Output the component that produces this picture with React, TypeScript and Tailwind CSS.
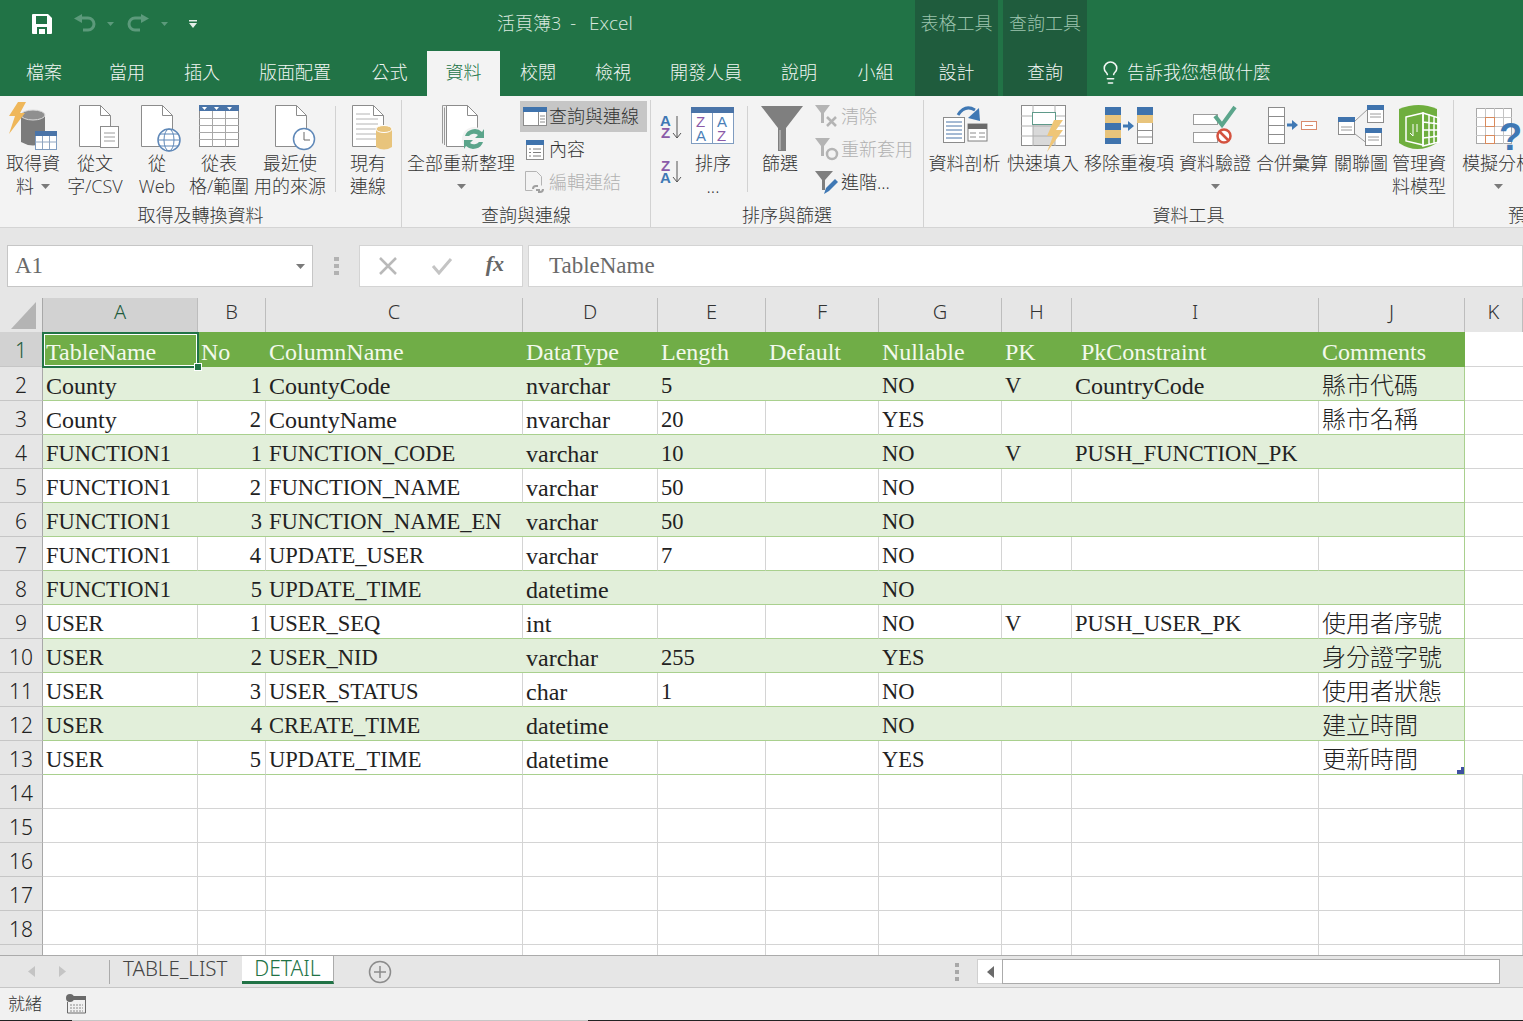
import React from "react";
import { Lightbulb } from "lucide-react";

const GRID_COLS =
  "grid grid-cols-[43px_155px_68px_257px_135px_108px_113px_123px_70px_247px_146px_58px]";

const HEAD = ["TableName", "No", "ColumnName", "DataType", "Length", "Default", "Nullable", "PK", "\u00a0PkConstraint", "Comments"];

const ROWS: string[][] = [
  ["County", "1", "CountyCode", "nvarchar", "5", "", "NO", "V", "CountryCode", "縣市代碼"],
  ["County", "2", "CountyName", "nvarchar", "20", "", "YES", "", "", "縣市名稱"],
  ["FUNCTION1", "1", "FUNCTION_CODE", "varchar", "10", "", "NO", "V", "PUSH_FUNCTION_PK", ""],
  ["FUNCTION1", "2", "FUNCTION_NAME", "varchar", "50", "", "NO", "", "", ""],
  ["FUNCTION1", "3", "FUNCTION_NAME_EN", "varchar", "50", "", "NO", "", "", ""],
  ["FUNCTION1", "4", "UPDATE_USER", "varchar", "7", "", "NO", "", "", ""],
  ["FUNCTION1", "5", "UPDATE_TIME", "datetime", "", "", "NO", "", "", ""],
  ["USER", "1", "USER_SEQ", "int", "", "", "NO", "V", "PUSH_USER_PK", "使用者序號"],
  ["USER", "2", "USER_NID", "varchar", "255", "", "YES", "", "", "身分證字號"],
  ["USER", "3", "USER_STATUS", "char", "1", "", "NO", "", "", "使用者狀態"],
  ["USER", "4", "CREATE_TIME", "datetime", "", "", "NO", "", "", "建立時間"],
  ["USER", "5", "UPDATE_TIME", "datetime", "", "", "YES", "", "", "更新時間"],
];

const CELL_FONT = "font-['Liberation_Serif','Noto_Sans_CJK_TC',serif] font-light leading-[38px] whitespace-nowrap";

// the reference's latin capitals run narrower than its lowercase
function cellSize(v: string) {
  return v === v.toUpperCase() && /[A-Z0-9]/.test(v) ? "text-[22.5px]" : "text-[24px]";
}

function Caret({ dim }: { dim?: boolean }) {
  return (
    <svg width="9" height="5" viewBox="0 0 9 5">
      <path d="M0 0h9L4.5 5z" fill={dim ? "#b5b5b5" : "#7a7a7a"} />
    </svg>
  );
}

function Page({ x = 9, lines = false }: { x?: number; lines?: boolean }) {
  return (
    <g>
      <path d={`M${x + 0.5} 1.5h21l10 10v31h-31z`} fill="#fff" stroke="#8c8c8c" />
      <path d={`M${x + 21.5} 1.5v10h10`} fill="none" stroke="#8c8c8c" />
      {lines && (
        <path
          d={`M${x + 4} 10h14M${x + 4} 15h22M${x + 4} 20h22M${x + 4} 25h22M${x + 4} 30h22M${x + 4} 35h22`}
          stroke="#b4b4b4"
        />
      )}
    </g>
  );
}

function Ico({ children }: { children: React.ReactNode }) {
  return (
    <svg width="50" height="48" viewBox="0 0 50 48" className="overflow-visible shrink-0">
      {children}
    </svg>
  );
}

const IconGetData = () => (
  <Ico>
    <path d="M13 11v27q12 7 24 0V11z" fill="#7b7b7b" />
    <ellipse cx="25" cy="11" rx="12" ry="5" fill="#8f8f8f" stroke="#dcdcdc" />
    <path d="M10-2h8l-6 11h5L1 30l6-18H1z" fill="#efb75a" />
    <rect x="27.500" y="27.500" width="21" height="18" fill="#fff" stroke="#7f9cc0" />
    <rect x="27" y="27" width="22" height="5" fill="#4a74a8" />
    <path d="M27 38h22M34.500 32v13M41.500 32v13" stroke="#8fa5c0" />
  </Ico>
);

const IconText = () => (
  <Ico>
    <Page />
    <rect x="30.500" y="22.500" width="18" height="21" fill="#fff" stroke="#8c8c8c" />
    <path d="M34 29h11M34 33h11M34 37h11" stroke="#9c9c9c" />
  </Ico>
);

const IconWeb = () => (
  <Ico>
    <Page />
    <circle cx="37" cy="36" r="11" fill="#fff" stroke="#5f88b8" strokeWidth="1.5" />
    <ellipse cx="37" cy="36" rx="5" ry="11" fill="none" stroke="#5f88b8" />
    <path d="M26 36h22M28 30h18M28 42h18" stroke="#5f88b8" />
  </Ico>
);

const IconTable = () => (
  <Ico>
    <rect x="5.500" y="1.500" width="39" height="41" fill="#fff" stroke="#8c8c8c" />
    <rect x="5" y="1" width="40" height="6" fill="#4a74a8" />
    <path d="M8 3h5l-2.500 3zM20 3h5l-2.500 3zM33 3h5l-2.500 3z" fill="#fff" />
    <path d="M5 14.500h40M5 21.500h40M5 28.500h40M5 35.500h40M18.500 7v36M31.500 7v36" stroke="#a8a8a8" />
  </Ico>
);

const IconRecent = () => (
  <Ico>
    <Page x={10} />
    <circle cx="39" cy="35" r="10.500" fill="#fff" stroke="#5f88b8" strokeWidth="1.500" />
    <path d="M39 28v8h6" fill="none" stroke="#6a6a6a" />
  </Ico>
);

const IconExisting = () => (
  <Ico>
    <Page lines />
    <path d="M33 25v18q8 5 16 0V25z" fill="#e8c47c" />
    <ellipse cx="41" cy="25" rx="8" ry="3.500" fill="#e8c47c" stroke="#fff" />
  </Ico>
);

const IconRefresh = () => (
  <Ico>
    <path d="M6.500 1.500h22M6.500 1.500v38" fill="none" stroke="#9a9a9a" />
    <path d="M8.500 3.500V41" fill="none" stroke="#9a9a9a" />
    <Page x={10} />
    <circle cx="38" cy="35" r="12" fill="#f3f3f3" />
    <path d="M29 32a10 9 0 0 1 17-4l2-3v9h-9l3-3a6 5 0 0 0-9 1zM47 38a10 9 0 0 1-17 4l-2 3v-9h9l-3 3a6 5 0 0 0 9-1z" fill="#5ba58b" />
  </Ico>
);

const IconSortBig = () => (
  <Ico>
    <rect x="3.500" y="3.500" width="42" height="36" fill="#fff" stroke="#7f9cc0" />
    <rect x="3" y="3" width="43" height="6" fill="#4a74a8" />
    <path d="M24.500 9v30" stroke="#7f9cc0" />
    <text fontSize="15" fontFamily="'Liberation Sans',sans-serif">
      <tspan x="8" y="23" fill="#8a5aa8">Z</tspan>
      <tspan x="8" y="37" fill="#4a7fb8">A</tspan>
      <tspan x="29" y="23" fill="#4a7fb8">A</tspan>
      <tspan x="29" y="37" fill="#8a5aa8">Z</tspan>
    </text>
  </Ico>
);

const IconFunnel = () => (
  <Ico>
    <path d="M6 2h42L31 24v23h-8V24z" fill="#7f7f7f" />
    <path d="M25 26v20" stroke="#a8a8a8" strokeWidth="2" />
  </Ico>
);

const IconColumns = () => (
  <Ico>
    <rect x="3.500" y="13.500" width="21" height="25" fill="#fff" stroke="#8c8c8c" />
    <path d="M6 18h16M6 22h16M6 26h16M6 30h16M6 34h16" stroke="#4a74a8" />
    <rect x="28" y="20" width="19" height="17" fill="#fff" stroke="#7f7f7f" />
    <rect x="28" y="20" width="19" height="5" fill="#6a6a6a" />
    <path d="M30 29h6M39 29h6M30 33h6M39 33h6" stroke="#8c8c8c" />
    <path d="M18 11q7-11 17-5" fill="none" stroke="#3f78b4" strokeWidth="3" />
    <path d="M28 14l12 3-1-13z" fill="#3f78b4" />
  </Ico>
);

const IconFlash = () => (
  <Ico>
    <rect x="3.500" y="1.500" width="44" height="40" fill="#fff" stroke="#8c8c8c" />
    <rect x="15" y="19" width="22" height="22" fill="#d9d9d9" />
    <path d="M3 12h44M3 22h44M3 32h44M15 1v41M37 1v41" stroke="#b0b0b0" />
    <rect x="14.500" y="8.500" width="23" height="12" fill="#fff" stroke="#5f9a8a" />
    <path d="M45 16h-9l-7 16h6l-6 16 16-22h-7z" fill="#efc678" />
  </Ico>
);

const IconDup = () => (
  <Ico>
    <rect x="1" y="3" width="16" height="37" fill="#fff" />
    <path d="M1 3h16v8H1zM1 19h16v8H1zM1 33h16v7H1z" fill="#3f73ad" />
    <path d="M1 11h16v8H1zM1 26h16v8H1z" fill="#e8c47c" />
    <rect x="33.500" y="3.500" width="15" height="36" fill="#fff" stroke="#8c8c8c" />
    <path d="M33 3h16v8H33z" fill="#3f73ad" />
    <path d="M33 11h16v8H33z" fill="#e8c47c" />
    <path d="M33 26.500h16M33 33h16" stroke="#8c8c8c" />
    <path d="M19 22h6" stroke="#3f78b4" strokeWidth="3" />
    <path d="M24 17l6 5-6 5z" fill="#3f78b4" />
  </Ico>
);

const IconValidate = () => (
  <Ico>
    <rect x="3.500" y="10.500" width="24" height="10" fill="#fff" stroke="#9c9c9c" />
    <rect x="3.500" y="28.500" width="24" height="10" fill="#fff" stroke="#9c9c9c" />
    <path d="M25 12l7 9L45 3" fill="none" stroke="#5ba58b" strokeWidth="4" />
    <circle cx="34" cy="32" r="6.500" fill="#fff" stroke="#d4523f" strokeWidth="2.500" />
    <path d="M30 28l8 8" stroke="#d4523f" strokeWidth="2.500" />
  </Ico>
);

const IconConsolidate = () => (
  <Ico>
    <rect x="1.500" y="3.500" width="16" height="36" fill="#fff" stroke="#8c8c8c" />
    <path d="M1 12.500h17M1 21.500h17M1 30.500h17" stroke="#8c8c8c" />
    <path d="M20 21h6" stroke="#3f78b4" strokeWidth="3" />
    <path d="M25 16l6 5-6 5z" fill="#3f78b4" />
    <rect x="34.500" y="17.500" width="15" height="8" fill="#fff" stroke="#d98a6c" />
    <path d="M38 21.500h8" stroke="#d98a6c" />
  </Ico>
);

const IconRelation = () => (
  <Ico>
    <path d="M19 17L32 5M19 30l13 10" fill="none" stroke="#9c9c9c" />
    <rect x="2.500" y="13.500" width="16" height="17" fill="#fff" stroke="#8c8c8c" />
    <rect x="2" y="13" width="17" height="5" fill="#3f73ad" />
    <rect x="31.500" y="1.500" width="16" height="17" fill="#fff" stroke="#8c8c8c" />
    <rect x="31" y="1" width="17" height="5" fill="#3f73ad" />
    <rect x="29.500" y="24.500" width="16" height="17" fill="#fff" stroke="#8c8c8c" />
    <rect x="29" y="24" width="17" height="5" fill="#3f73ad" />
    <path d="M5 23h11M5 26h11M34 10h11M34 13h11M32 33h11M32 36h11" stroke="#9c9c9c" />
  </Ico>
);

const IconModel = () => (
  <Ico>
    <path d="M5 5q20-8 38 0v34q-20 12-38 0z" fill="#6fae3e" />
    <path d="M12 13l17-4v32l-17-4z" fill="none" stroke="#fff" strokeWidth="1.500" />
    <path d="M29 9l16 5v24l-16 4zM29 18l16 2M29 26l16 0M29 34l16-2M35 10v31M40 12v28" fill="none" stroke="#fff" strokeWidth="1.500" />
    <path d="M19 20v12M19 32l-3-3M23 20v8" fill="none" stroke="#fff" />
  </Ico>
);

const IconWhatIf = () => (
  <Ico>
    <rect x="3.500" y="4.500" width="35" height="35" fill="#fff" stroke="#a8a8a8" />
    <path d="M3 13.500h36M3 22.500h36M3 31.500h36M12.500 4v36M21.500 4v36M30.500 4v36" stroke="#c4c4c4" />
    <rect x="12.500" y="13.500" width="9" height="9" fill="none" stroke="#d98a5c" />
    <rect x="12.500" y="31.500" width="9" height="8" fill="none" stroke="#d98a5c" />
    <text x="26" y="46" fill="#3f78b4" fontSize="38" fontWeight="700" fontFamily="'Liberation Sans',sans-serif">?</text>
  </Ico>
);

function Big({
  w,
  lines,
  icon,
  caret,
}: {
  w: string;
  lines: string[];
  icon: React.ReactNode;
  caret?: boolean;
}) {
  return (
    <div className={`flex flex-col items-center shrink-0 ${w}`}>
      {icon}
      {lines.map((l, i) => (
        <div key={i} className="whitespace-nowrap h-[23px] flex items-center gap-[7px]">
          {l}
          {caret && lines.length === 2 && i === 1 && <Caret />}
        </div>
      ))}
      {caret && lines.length === 1 && (
        <div className="h-[23px] flex items-center">
          <Caret />
        </div>
      )}
    </div>
  );
}

function Small({
  label,
  icon,
  dim,
  active,
}: {
  label: string;
  icon: React.ReactNode;
  dim?: boolean;
  active?: boolean;
}) {
  return (
    <div
      className={`h-[31px] flex items-center whitespace-nowrap mb-[2px] ${dim ? "text-[#b1b1b1]" : ""} ${
        active ? "bg-[#c6c6c6]" : ""
      }`}
    >
      <div className="w-[29px] h-[26px] flex items-center justify-center shrink-0">{icon}</div>
      {label}
    </div>
  );
}

function Group({ w, label, children, last }: { w: string; label: string; children: React.ReactNode; last?: boolean }) {
  return (
    <div className={`shrink-0 flex flex-col h-[128px] mt-[4px] ${w} ${last ? "" : "border-r border-[#d2d2d2]"}`}>
      <div className="flex flex-1 pt-[4px]">{children}</div>
      <div className="h-[28px] text-center leading-[30px] whitespace-nowrap">{label}</div>
    </div>
  );
}

function TitleBar() {
  return (
    <div className="h-[48px] flex text-[#d9e8df]">
      <div className="w-[497px] flex items-center pl-[32px] shrink-0">
        <svg width="20" height="20" viewBox="0 0 20 20">
          <path d="M1 0h15l4 4v15a1 1 0 0 1-1 1H1a1 1 0 0 1-1-1V1a1 1 0 0 1 1-1z" fill="#fff" />
          <rect x="4" y="2" width="11" height="8" fill="#217346" />
          <rect x="5" y="13" width="10" height="7" fill="#217346" />
          <rect x="7" y="15" width="6" height="5" fill="#fff" />
        </svg>
        <svg width="24" height="20" viewBox="0 0 24 20" className="ml-[20px]">
          <path d="M9 4h7a6 6 0 0 1 0 12h-5" fill="none" stroke="#5c9a7b" strokeWidth="3" />
          <path d="M10 0v9L2 4.500z" fill="#5c9a7b" />
        </svg>
        <div className="ml-[11px]">
          <svg width="7" height="4" viewBox="0 0 7 4" className="block"><path d="M0 0h7L3.500 4z" fill="#5c9a7b" /></svg>
        </div>
        <svg width="24" height="20" viewBox="0 0 24 20" className="ml-[13px]">
          <path d="M15 4H8a6 6 0 0 0 0 12h5" fill="none" stroke="#5c9a7b" strokeWidth="3" />
          <path d="M14 0v9l8-4.500z" fill="#5c9a7b" />
        </svg>
        <div className="ml-[10px]">
          <svg width="7" height="4" viewBox="0 0 7 4" className="block"><path d="M0 0h7L3.500 4z" fill="#5c9a7b" /></svg>
        </div>
        <svg width="8" height="8" viewBox="0 0 8 8" className="ml-[21px]">
          <path d="M0 0h8v1.500H0zM0 3h8L4 8z" fill="#e4efe9" />
        </svg>
      </div>
      <div className="w-[418px] shrink-0 text-[18px] leading-[46px] flex">
        <span>活頁簿3</span>
        <span className="ml-[9px]">-</span>
        <span className="ml-[13px] text-[19px]">Excel</span>
      </div>
      <div className="w-[83px] shrink-0 bg-[#1f5c3d] text-[#9cc4ae] text-[18px] leading-[46px] text-center">表格工具</div>
      <div className="w-[5px] shrink-0" />
      <div className="w-[84px] shrink-0 bg-[#1f5c3d] text-[#9cc4ae] text-[18px] leading-[46px] text-center">查詢工具</div>
    </div>
  );
}

const TABS = [
  { t: "檔案", w: "w-[88px]" },
  { t: "當用", w: "w-[78px]" },
  { t: "插入", w: "w-[72px]" },
  { t: "版面配置", w: "w-[114px]" },
  { t: "公式", w: "w-[75px]" },
  { t: "資料", w: "w-[73px]", active: true },
  { t: "校閱", w: "w-[76px]" },
  { t: "檢視", w: "w-[74px]" },
  { t: "開發人員", w: "w-[112px]" },
  { t: "說明", w: "w-[74px]" },
  { t: "小組", w: "w-[79px]" },
];

function TabBar() {
  return (
    <div className="h-[48px] flex text-[18px] text-[#f1f6f3] items-end">
      {TABS.map((tab) =>
        tab.active ? (
          <div key={tab.t} className={`${tab.w} h-[45px] shrink-0 bg-[#f3f3f3] text-[#217346] text-center leading-[42px]`}>
            {tab.t}
          </div>
        ) : (
          <div key={tab.t} className={`${tab.w} h-[48px] shrink-0 text-center leading-[48px]`}>
            {tab.t}
          </div>
        ),
      )}
      <div className="w-[83px] h-[48px] shrink-0 bg-[#1f5c3d] text-center leading-[48px]">設計</div>
      <div className="w-[5px] shrink-0" />
      <div className="w-[84px] h-[48px] shrink-0 bg-[#1f5c3d] text-center leading-[48px]">查詢</div>
      <div className="h-[48px] flex items-center pl-[11px] gap-[4px]">
        <Lightbulb size={25} strokeWidth={1.5} />
        <span>告訴我您想做什麼</span>
      </div>
    </div>
  );
}

function Ribbon() {
  return (
    <div className="h-[132px] bg-[#f3f3f3] border-b border-[#d4d4d4] flex overflow-hidden text-[18px] leading-[23px] text-[#333]">
      <Group w="w-[402px]" label="取得及轉換資料">
        <Big w="w-[66px]" lines={["取得資", "料"]} caret icon={<IconGetData />} />
        <Big w="w-[58px]" lines={["從文", "字/CSV"]} icon={<IconText />} />
        <Big w="w-[66px]" lines={["從", "Web"]} icon={<IconWeb />} />
        <Big w="w-[58px]" lines={["從表", "格/範圍"]} icon={<IconTable />} />
        <Big w="w-[84px]" lines={["最近使", "用的來源"]} icon={<IconRecent />} />
        <div className="w-[4px] h-[86px] border-r border-[#d2d2d2] shrink-0 mt-[2px]" />
        <Big w="w-[64px]" lines={["現有", "連線"]} icon={<IconExisting />} />
      </Group>
      <Group w="w-[249px]" label="查詢與連線">
        <Big w="w-[118px]" lines={["全部重新整理"]} caret icon={<IconRefresh />} />
        <div className="w-[127px] shrink-0 -mt-[3px]">
          <Small
            active
            label="查詢與連線"
            icon={
              <svg width="24" height="19" viewBox="0 0 24 19">
                <rect x=".5" y=".5" width="23" height="18" fill="#fff" stroke="#8c8c8c" />
                <rect width="24" height="5" fill="#3f73ad" />
                <path d="M15.500 5v14M17 9h5M17 12h5M17 15h5" stroke="#8c8c8c" />
              </svg>
            }
          />
          <Small
            label="內容"
            icon={
              <svg width="18" height="20" viewBox="0 0 18 20">
                <rect x=".5" y=".5" width="17" height="19" fill="#fff" stroke="#8c8c8c" />
                <rect width="18" height="5" fill="#3f73ad" />
                <path d="M3 9h2M7 9h8M3 12.500h2M7 12.500h8M3 16h2M7 16h8" stroke="#7f7f7f" />
              </svg>
            }
          />
          <Small
            dim
            label="編輯連結"
            icon={
              <svg width="20" height="23" viewBox="0 0 20 23">
                <path d="M.5.5h11l5 5v9M.5.5v19h7" fill="none" stroke="#b4b4b4" />
                <path d="M8 18a3 3 0 0 1 3-3h2M18 18a3 3 0 0 1-3 3h-2M11 19h4" fill="none" stroke="#a0a0a0" strokeWidth="2" />
              </svg>
            }
          />
        </div>
      </Group>
      <Group w="w-[273px]" label="排序與篩選">
        <div className="w-[40px] shrink-0 flex flex-col items-center pt-[9px] pl-[2px]">
          <svg width="24" height="74" viewBox="0 0 24 74">
            <text fontSize="15" fontWeight="700" fontFamily="'Liberation Sans',sans-serif">
              <tspan x="0" y="13" fill="#3f78b4">A</tspan>
              <tspan x="1" y="25" fill="#8a5aa8">Z</tspan>
              <tspan x="1" y="58" fill="#8a5aa8">Z</tspan>
              <tspan x="0" y="70" fill="#3f78b4">A</tspan>
            </text>
            <path d="M17 3v22M13 20l4 5 4-5M17 48v21M13 64l4 5 4-5" fill="none" stroke="#555" />
          </svg>
        </div>
        <Big w="w-[44px]" lines={["排序", "..."]} icon={<IconSortBig />} />
        <div className="w-[13px] h-[86px] border-r border-[#d2d2d2] shrink-0 mt-[2px]" />
        <Big w="w-[66px] -ml-[1px]" lines={["篩選"]} icon={<IconFunnel />} />
        <div className="w-[100px] shrink-0 -mt-[3px] -ml-[1px]">
          <Small
            dim
            label="清除"
            icon={
              <svg width="24" height="23" viewBox="0 0 24 23">
                <path d="M0 0h15L9 8v10H6V8z" fill="#b4b4b4" />
                <path d="M12 12l9 9M21 12l-9 9" stroke="#b4b4b4" strokeWidth="2.500" />
              </svg>
            }
          />
          <Small
            dim
            label="重新套用"
            icon={
              <svg width="24" height="23" viewBox="0 0 24 23">
                <path d="M0 0h15L9 8v10H6V8z" fill="#b4b4b4" />
                <circle cx="17" cy="16" r="5" fill="none" stroke="#b4b4b4" strokeWidth="2.500" />
              </svg>
            }
          />
          <Small
            label="進階..."
            icon={
              <svg width="24" height="24" viewBox="0 0 24 24">
                <path d="M0 0h18L10 9v10H7V9z" fill="#7f7f7f" />
                <path d="M9 23l2-6 9-9 3 3-9 9z" fill="#3f78b4" />
              </svg>
            }
          />
        </div>
      </Group>
      <Group w="w-[530px]" label="資料工具">
        <Big w="w-[81px]" lines={["資料剖析"]} icon={<IconColumns />} />
        <Big w="w-[76px]" lines={["快速填入"]} icon={<IconFlash />} />
        <Big w="w-[96px]" lines={["移除重複項"]} icon={<IconDup />} />
        <Big w="w-[76px]" lines={["資料驗證"]} caret icon={<IconValidate />} />
        <Big w="w-[78px]" lines={["合併彙算"]} icon={<IconConsolidate />} />
        <Big w="w-[60px]" lines={["關聯圖"]} icon={<IconRelation />} />
        <Big w="w-[56px]" lines={["管理資", "料模型"]} icon={<IconModel />} />
      </Group>
      <Group w="w-[144px]" last label="預測">
        <Big w="w-[88px]" lines={["模擬分析"]} caret icon={<IconWhatIf />} />
      </Group>
    </div>
  );
}

function FormulaBar() {
  return (
    <div className="h-[70px] bg-[#e6e6e6] flex items-start pt-[17px] pl-[7px] font-['Liberation_Serif',serif] text-[23px] text-[#6a6a6a]">
      <div className="w-[306px] h-[42px] bg-white border border-[#c6c6c6] flex items-center justify-between pl-[7px] pr-[7px] shrink-0">
        A1
        <Caret />
      </div>
      <div className="w-[46px] h-[42px] flex items-center justify-center shrink-0">
        <svg width="5" height="20" viewBox="0 0 5 20">
          <path d="M0 1h5v4H0zM0 8h5v4H0zM0 15h5v4H0z" fill="#b2b2b2" />
        </svg>
      </div>
      <div className="w-[164px] h-[42px] bg-white border border-[#d4d4d4] flex items-center justify-between pl-[18px] pr-[18px] shrink-0">
        <svg width="20" height="18" viewBox="0 0 20 18">
          <path d="M2 1l16 16M18 1L2 17" stroke="#b9b9b9" strokeWidth="2.500" />
        </svg>
        <svg width="22" height="18" viewBox="0 0 22 18">
          <path d="M2 9l6 7L20 2" fill="none" stroke="#c4c4c4" strokeWidth="3" />
        </svg>
        <span className="italic font-bold text-[#666] text-[22px] leading-none pb-[4px]">fx</span>
      </div>
      <div className="ml-[5px] flex-1 h-[42px] bg-white border border-[#d4d4d4] pl-[20px] leading-[40px]">TableName</div>
    </div>
  );
}

function RowNum({ n, active }: { n: number; active?: boolean }) {
  return (
    <div
      className={`flex items-center justify-center pt-[3px] border-r border-r-[#a8a8a8] border-b border-b-[#c6c6c6] text-[21px] leading-none font-['Noto_Sans',sans-serif] font-light ${
        active ? "bg-[#d2d2d2] text-[#1f5c3d]" : "bg-[#e6e6e6] text-[#222]"
      }`}
    >
      {n}
    </div>
  );
}

function Sheet() {
  const letters = ["A", "B", "C", "D", "E", "F", "G", "H", "I", "J", "K"];
  return (
    <div className="flex-1 overflow-hidden bg-white">
      <div className={`${GRID_COLS} grid-rows-[34px] bg-[#e6e6e6] text-[20px] leading-none text-[#333] font-['Noto_Sans',sans-serif] font-light`}>
        <div className="border-r border-[#a8a8a8] flex items-end justify-end pr-[6px] pb-[3px]">
          <svg width="25" height="27" viewBox="0 0 25 27"><path d="M0 27L25 0v27z" fill="#b4b4b4" /></svg>
        </div>
        {letters.map((l, i) => (
          <div
            key={l}
            className={`flex items-center justify-center pb-[7px] border-r border-[#bdbdbd] ${
              i === 0 ? "bg-[#d2d2d2] text-[#1f5c3d]" : ""
            }`}
          >
            {l}
          </div>
        ))}
      </div>

      <div className={`${GRID_COLS} grid-rows-[35px]`}>
        <RowNum n={1} active />
        {HEAD.map((h, i) => (
          <div key={i} className={`bg-[#70ad47] text-[#f3f9ec] pl-[3px] pt-px relative ${CELL_FONT} text-[24px]`}>
            {h}
            {i === 0 && (
              <div className="absolute z-10 -left-px top-0 -right-px -bottom-px border-2 border-[#217346]">
                <div className="h-full border border-white" />
                <div className="absolute -right-[5px] -bottom-[5px] w-[8px] h-[8px] bg-[#217346] border border-white" />
              </div>
            )}
          </div>
        ))}
        <div className="border-b border-[#d4d4d4]" />
      </div>

      {ROWS.map((r, i) => {
        const band = i % 2 === 0;
        return (
          <div key={i} className={`${GRID_COLS} grid-rows-[34px]`}>
            <RowNum n={i + 2} />
            {r.map((v, j) => (
              <div
                key={j}
                className={`border-b border-[#a9d08e] pl-[3px] text-[#222] relative ${CELL_FONT} ${cellSize(v)} ${
                  j === 9
                    ? "border-r border-r-[#a9d08e]"
                    : band
                      ? ""
                      : "border-r border-r-[#d4d4d4]"
                } ${band ? "bg-[#e2efda]" : ""} ${j === 1 ? "text-right pr-[4px]" : ""}`}
              >
                {v}
                {i === 11 && j === 9 && (
                  <svg width="7" height="7" viewBox="0 0 7 7" className="absolute right-0 bottom-0">
                    <path d="M7 0v7H0V3h4V0z" fill="#3f51a0" />
                  </svg>
                )}
              </div>
            ))}
            <div className="border-b border-[#d4d4d4]" />
          </div>
        );
      })}

      {[14, 15, 16, 17, 18, 19].map((n) => (
        <div key={n} className={`${GRID_COLS} grid-rows-[34px]`}>
          {n === 19 ? <div className="bg-[#e6e6e6] border-r border-[#a8a8a8]" /> : <RowNum n={n} />}
          {letters.map((l) => (
            <div key={l} className="border-b border-r border-[#d4d4d4]" />
          ))}
        </div>
      ))}
    </div>
  );
}

function SheetTabs() {
  return (
    <div className="h-[32px] bg-[#e6e6e6] border-t border-[#ababab] flex text-[20.5px] font-['Noto_Sans',sans-serif] font-light">
      <div className="w-[110px] shrink-0 flex items-center pl-[28px] gap-[24px]">
        <svg width="7" height="11" viewBox="0 0 7 11"><path d="M7 0v11L0 5.500z" fill="#c4c4c4" /></svg>
        <svg width="7" height="11" viewBox="0 0 7 11"><path d="M0 0v11l7-5.500z" fill="#c4c4c4" /></svg>
        <div className="w-px h-[24px] bg-[#ababab] ml-[19px]" />
      </div>
      <div className="w-[132px] shrink-0 pl-[13px] text-[#444] leading-[24px] whitespace-nowrap">TABLE_LIST</div>
      <div className="w-[92px] shrink-0 h-[28px] bg-white border-b-[3px] border-r border-b-[#217346] border-r-[#ababab] text-[#217346] text-center text-[21px] leading-[24px]">
        DETAIL
      </div>
      <div className="w-[58px] shrink-0 flex items-center justify-end">
        <svg width="24" height="24" viewBox="0 0 24 24">
          <circle cx="12" cy="12" r="10.500" fill="none" stroke="#8c8c8c" strokeWidth="1.500" />
          <path d="M12 6v12M6 12h12" stroke="#8c8c8c" strokeWidth="1.500" />
        </svg>
      </div>
      <div className="w-[585px] shrink-0 flex items-center justify-end pr-[17px]">
        <svg width="5" height="18" viewBox="0 0 5 18">
          <path d="M0 0h4v4H0zM0 7h4v4H0zM0 14h4v4H0z" fill="#a8a8a8" />
        </svg>
      </div>
      <div className="h-[25px] mt-[3px] flex">
        <div className="w-[25px] h-full bg-white border-y border-l border-[#d0d0d0] flex items-center justify-center">
          <svg width="7" height="12" viewBox="0 0 7 12"><path d="M7 0v12L0 6z" fill="#6a6a6a" /></svg>
        </div>
        <div className="w-[498px] h-full bg-white border border-[#ababab]" />
      </div>
    </div>
  );
}

function StatusBar() {
  return (
    <div className="h-[34px] bg-[#f1f1f1] border-t border-[#c6c6c6] flex flex-col text-[#333] text-[17px]">
      <div className="flex-1 flex items-center pl-[8px]">
        <span className="w-[57px]">就緒</span>
        <svg width="21" height="20" viewBox="0 0 21 20">
          <circle cx="5" cy="4" r="4" fill="#6a6a6a" />
          <rect x="8" y="2" width="13" height="4" fill="#6a6a6a" />
          <path d="M2.500 8v11h18V6" fill="none" stroke="#6a6a6a" />
          <path d="M5 11h13M5 14h13M5 17h13" stroke="#8c8c8c" strokeDasharray="2 1" />
        </svg>
      </div>
      <div className="h-px flex shrink-0">
        <div className="w-[72px] bg-[#222]" />
        <div className="w-[516px] bg-[#c6c6c6]" />
        <div className="flex-1 bg-[#222]" />
      </div>
    </div>
  );
}

export default function App() {
  return (
    <div className="w-[1523px] h-[1021px] overflow-hidden flex flex-col font-light font-['Open_Sans','Noto_Sans_CJK_TC',sans-serif]">
      <div className="bg-[#217346]">
        <TitleBar />
        <TabBar />
      </div>
      <Ribbon />
      <FormulaBar />
      <Sheet />
      <SheetTabs />
      <StatusBar />
    </div>
  );
}
